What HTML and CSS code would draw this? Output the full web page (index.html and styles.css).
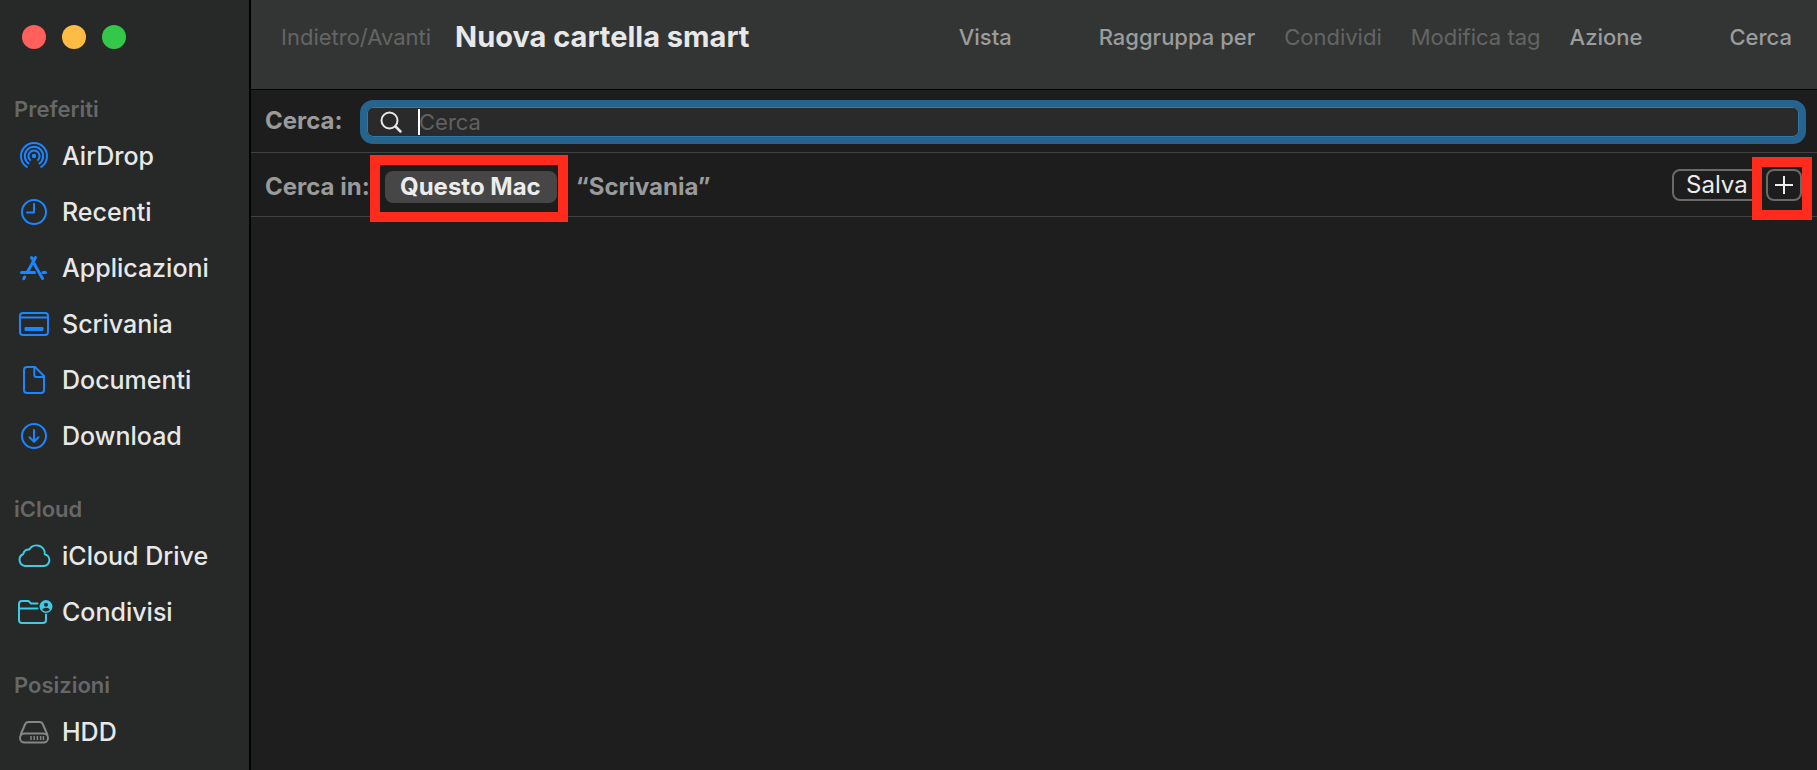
FILE: index.html
```html
<!DOCTYPE html>
<html lang="it">
<head>
<meta charset="utf-8">
<title>Nuova cartella smart</title>
<link rel="stylesheet" href="styles.css">
</head>
<body>
<div class="window">
  <aside class="sidebar">
    <div class="lights">
      <button class="light light-close" aria-label="Chiudi"></button>
      <button class="light light-min" aria-label="Contrai"></button>
      <button class="light light-zoom" aria-label="Ingrandisci"></button>
    </div>
    <nav class="groups">
      <section class="group">
        <h2 class="group-title">Preferiti</h2>
        <a class="item" href="#airdrop">
          <svg class="icon" viewBox="0 0 36 32"><g fill="none" stroke="currentColor" stroke-width="2"><path d="M11.500 27.300A13 13 0 1 1 24.500 27.300"/><path d="M13.200 23.900A9.200 9.200 0 1 1 22.800 23.900"/><path d="M14.700 20.600A5.600 5.600 0 1 1 21.300 20.600"/></g><circle cx="18" cy="16" r="2.200" fill="currentColor"/></svg>
          AirDrop</a>
        <a class="item" href="#recenti">
          <svg class="icon" viewBox="0 0 36 32"><g fill="none" stroke="currentColor" stroke-width="2" stroke-linecap="round" stroke-linejoin="round"><circle cx="18" cy="16" r="12"/><path d="M18 8v8.500h-7"/></g></svg>
          Recenti</a>
        <a class="item" href="#applicazioni">
          <svg class="icon" viewBox="0 0 36 32"><g fill="none" stroke="currentColor" stroke-width="3" stroke-linecap="round"><path d="M15.500 5.500l2 3.500M19.500 5.500L11.500 20M5.500 20.500H18.500M27 20.500h2.500M8.700 25l-1 1.700M18 11.500l8.500 15"/></g></svg>
          Applicazioni</a>
        <a class="item" href="#scrivania">
          <svg class="icon" viewBox="0 0 36 32"><g fill="none" stroke="currentColor" stroke-width="2"><rect x="4" y="5" width="28" height="22" rx="3"/><path d="M4 9.500h28"/></g><rect x="8.500" y="19" width="19" height="4" rx="1" fill="currentColor"/></svg>
          Scrivania</a>
        <a class="item" href="#documenti">
          <svg class="icon" viewBox="0 0 36 32"><g fill="none" stroke="currentColor" stroke-width="2" stroke-linejoin="round"><path d="M11 3h8l9 9v14a3 3 0 0 1-3 3H11a3 3 0 0 1-3-3V6a3 3 0 0 1 3-3z"/><path d="M18.300 3v8a2 2 0 0 0 2 2H28"/></g></svg>
          Documenti</a>
        <a class="item" href="#download">
          <svg class="icon" viewBox="0 0 36 32"><g fill="none" stroke="currentColor" stroke-width="2" stroke-linecap="round" stroke-linejoin="round"><circle cx="18" cy="16" r="12"/><path d="M18 10v11.500M13.500 17.300l4.500 4.400 4.500-4.400"/></g></svg>
          Download</a>
      </section>
      <section class="group">
        <h2 class="group-title">iCloud</h2>
        <a class="item" href="#icloud-drive">
          <svg class="icon icon-cloud" viewBox="0 0 36 32"><path fill="none" stroke="currentColor" stroke-width="2" stroke-linejoin="round" d="M9 26A6.300 6.300 0 0 1 7.300 14A5 5 0 0 1 13.300 9.600A8.300 8.300 0 0 1 28.800 14.200A6 6 0 0 1 28 26z"/></svg>
          iCloud Drive</a>
        <a class="item" href="#condivisi">
          <svg class="icon icon-cloud" viewBox="0 0 36 32"><g fill="none" stroke="currentColor" stroke-width="2" stroke-linecap="round" stroke-linejoin="round"><path d="M21.500 7.500h-6.500l-2.500-2.500H6a3 3 0 0 0-3 3v16a3 3 0 0 0 3 3h21a3 3 0 0 0 3-3v-5.500M3 12.500h18.500"/></g><circle cx="30" cy="10.500" r="6.500" fill="currentColor"/><circle class="cut" cx="30" cy="8.700" r="2"/><path class="cut" d="M26 14a4.200 3.200 0 0 1 8 0a7 7 0 0 1-8 0z"/></svg>
          Condivisi</a>
      </section>
      <section class="group">
        <h2 class="group-title">Posizioni</h2>
        <a class="item" href="#hdd">
          <svg class="icon icon-disk" viewBox="0 0 36 32"><g fill="none" stroke="currentColor" stroke-width="2"><path d="M4.500 19L9 8.500Q10 6 12.500 6h11Q26 6 27 8.500L31.500 19"/><rect x="4" y="17.500" width="28" height="9" rx="4.500"/></g><path stroke="currentColor" stroke-width="1.500" d="M15 20v4M18.200 20v4M21.400 20v4M24.600 20v4M27.400 20v4"/></svg>
          HDD</a>
      </section>
    </nav>
  </aside>
  <main class="main">
    <header class="toolbar">
      <button class="tool" disabled>Indietro/Avanti</button>
      <h1 class="title">Nuova cartella smart</h1>
      <div class="tools">
        <button class="tool">Vista</button>
        <div class="tool-set">
          <button class="tool">Raggruppa per</button>
          <button class="tool" disabled>Condividi</button>
          <button class="tool" disabled>Modifica tag</button>
          <button class="tool">Azione</button>
        </div>
        <button class="tool">Cerca</button>
      </div>
    </header>
    <div class="row">
      <label class="label search-label" for="search">Cerca:</label>
      <div class="field">
        <svg class="lens" viewBox="0 0 24 24"><g fill="none" stroke="currentColor" stroke-width="2" stroke-linecap="round"><circle cx="10.500" cy="10.500" r="8"/><path stroke-width="2.500" d="M16.500 16.500l5 5"/></g></svg>
        <div class="entry">
          <input class="input" id="search" type="text" placeholder="Cerca">
          <span class="caret"></span>
        </div>
      </div>
    </div>
    <div class="row scope">
      <div class="scope-set">
        <span class="label scope-label">Cerca in:</span>
        <div class="marked marked-scope"><button class="pill">Questo Mac</button></div>
        <button class="scope-option">“Scrivania”</button>
      </div>
      <div class="actions">
        <button class="outline save">Salva</button>
        <div class="marked marked-add"><button class="outline add" aria-label="Aggiungi criterio"><svg class="plus" viewBox="0 0 18 18"><path d="M9 0v18M0 9h18" stroke="currentColor" stroke-width="2"/></svg></button></div>
      </div>
    </div>
  </main>
</div>
</body>
</html>
```
FILE: styles.css
```css
* { box-sizing: border-box; }

body {
  margin: 0;
  background: #1d1e1d;
  color: #e8e8e8;
  font-family: Inter, "Liberation Sans", sans-serif;
}

button {
  margin: 0;
  padding: 0;
  border: 0;
  background: none;
  color: inherit;
  font: inherit;
  white-space: nowrap;
}

.window {
  display: flex;
  min-height: 100vh;
}

.sidebar {
  flex: 0 0 251px;
  border-right: 2px solid #000;
  background: #272828;
}

.lights {
  display: flex;
  gap: 16px;
  padding: 25px 22px 42px;
}

.light {
  width: 24px;
  height: 24px;
  border-radius: 50%;
}

.light-close { background: #ff605c; }
.light-min { background: #ffbc44; }
.light-zoom { background: #34c84a; }

.groups {
  display: flex;
  flex-direction: column;
  gap: 27px;
}

.group-title {
  margin: 0;
  padding-left: 14px;
  color: #666767;
  font-size: 22px;
  font-weight: 600;
  line-height: 37px;
}

.item {
  display: flex;
  align-items: center;
  gap: 10px;
  height: 56px;
  padding-left: 16px;
  color: #e8e8e8;
  font-size: 25px;
  font-weight: 500;
  text-decoration: none;
  white-space: nowrap;
}

.icon {
  width: 36px;
  height: 32px;
  overflow: visible;
  color: #1a86ff;
}

.icon-cloud { color: #3dcbe6; }
.icon-disk { color: #858686; }
.cut { fill: #272828; }

.main {
  flex: 1;
  min-width: 0;
}

.toolbar {
  display: flex;
  align-items: center;
  height: 90px;
  padding: 0 25px 16px 30px;
  border-bottom: 1px solid #000;
  background: #333534;
}

.tool {
  color: #9b9c9c;
  font-size: 22px;
  font-weight: 500;
}

.tool:disabled {
  color: #636564;
  font-weight: 400;
}

.title {
  margin: 0 0 0 24px;
  font-size: 29px;
  font-weight: 700;
  white-space: nowrap;
}

.tools {
  display: flex;
  gap: 87px;
  margin-left: auto;
}

.tool-set {
  display: flex;
  gap: 29px;
}

.row {
  display: flex;
  align-items: center;
  height: 63px;
  padding: 2px 11px 0 14px;
  border-bottom: 1px solid #414242;
  background: #1d1d1d;
}

.label {
  flex-shrink: 0;
  color: #9a9a9a;
  font-size: 24px;
  font-weight: 700;
  white-space: nowrap;
}

.search-label {
  width: 95px;
  padding-bottom: 4px;
}

.field {
  display: flex;
  flex: 1;
  align-items: center;
  gap: 16px;
  height: 44px;
  padding-left: 12px;
  border: 7px solid #24648f;
  border-radius: 13px;
  background: #2a2a2a;
  box-shadow: inset 0 0 0 1px #3378a5;
}

.lens {
  width: 24px;
  height: 24px;
}

.entry {
  position: relative;
  flex: 1;
}

.input {
  display: block;
  width: 100%;
  height: 28px;
  padding: 0;
  border: 0;
  outline: 0;
  background: none;
  color: #e8e8e8;
  font: 22px Inter, "Liberation Sans", sans-serif;
}

.input::placeholder {
  color: #606060;
  opacity: 1;
}

.caret {
  position: absolute;
  top: 1px;
  left: -1px;
  width: 2px;
  height: 26px;
  background: #fff;
}

.scope {
  height: 64px;
  padding-top: 0;
}

.scope-set {
  display: flex;
  align-items: center;
  padding-top: 4px;
}

.scope-label { width: 120px; }

.marked {
  position: relative;
  display: flex;
}

.marked::after {
  position: absolute;
  border: 10px solid #ff2b1c;
  content: "";
  pointer-events: none;
}

.marked-scope::after { inset: -16px -11px -19px -15px; }
.marked-add::after { inset: -12px -10px -19px -14px; }

.pill {
  height: 32px;
  padding: 0 16px 0 15px;
  border-radius: 8px;
  background: #464646;
  color: #ececec;
  font-size: 24px;
  font-weight: 700;
}

.scope-option {
  margin-left: 19px;
  color: #9a9a9a;
  font-size: 24px;
  font-weight: 700;
}

.actions {
  display: flex;
  gap: 6px;
  margin-left: auto;
  padding-right: 4px;
}

.outline {
  height: 32px;
  border: 2px solid #6a6a6a;
  border-radius: 8px;
  color: #ececec;
  font-size: 24px;
  font-weight: 400;
}

.save {
  width: 88px;
  padding-left: 12px;
  text-align: left;
  line-height: 28px;
}

.add {
  display: grid;
  place-items: center;
  width: 36px;
}

.plus {
  width: 18px;
  height: 18px;
}
```
